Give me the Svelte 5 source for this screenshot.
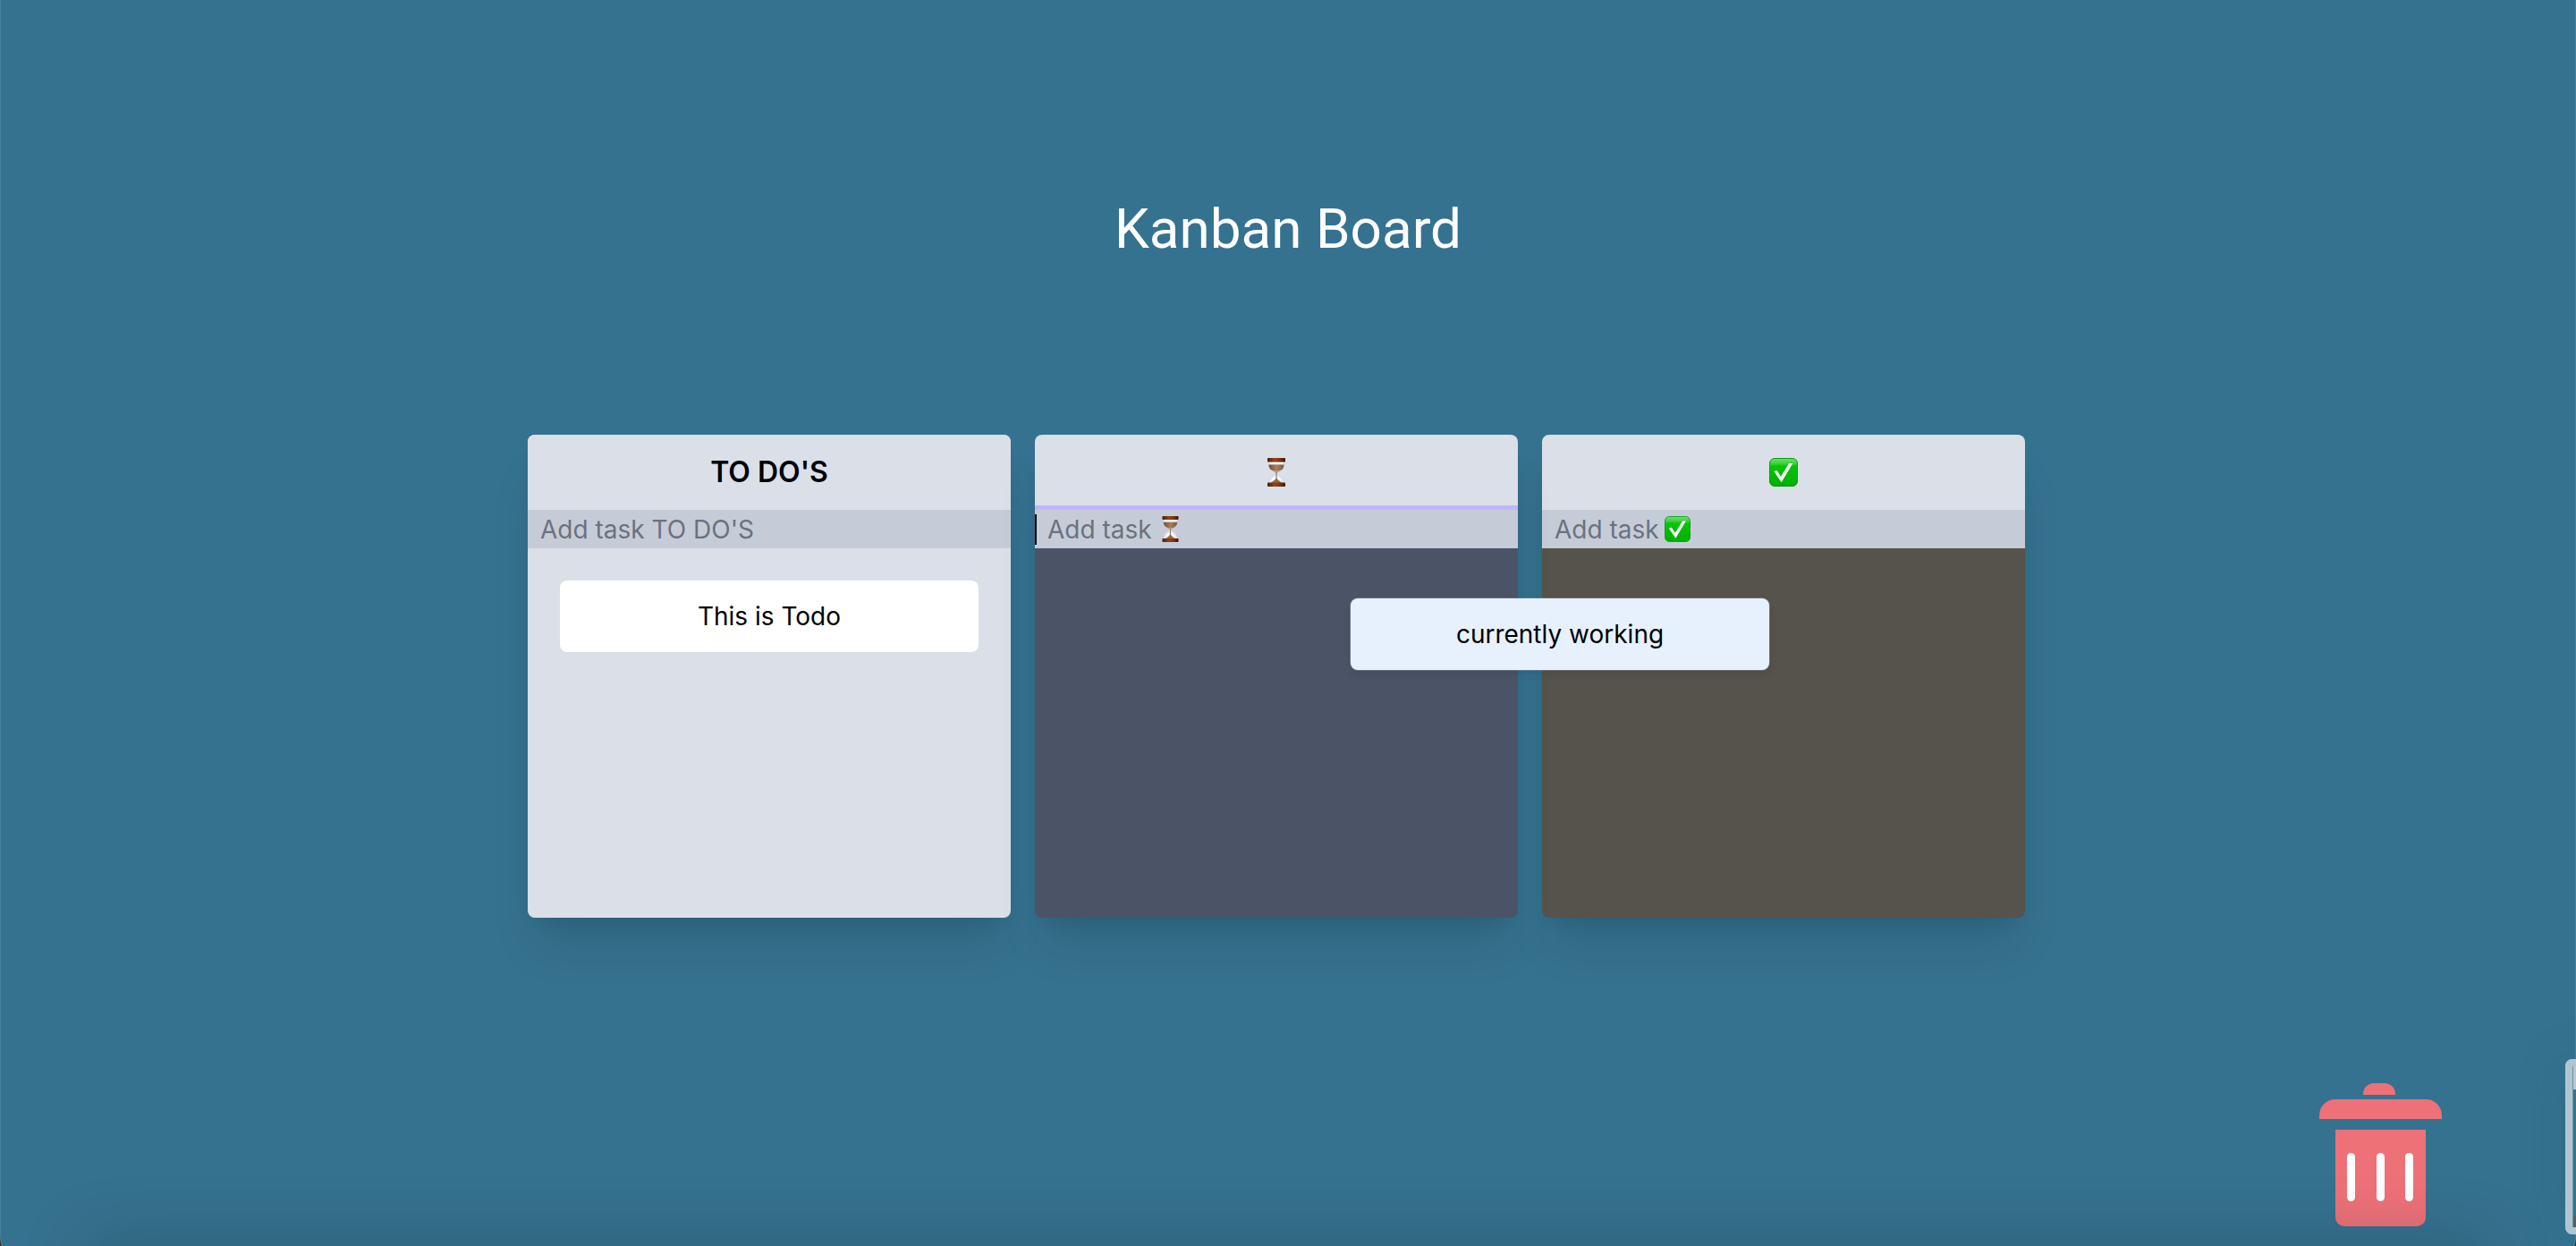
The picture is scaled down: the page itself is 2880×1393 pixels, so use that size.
<script>
  const columns = [
    { id: 'todo', title: "TO DO'S", tone: 'light', tasks: ['This is Todo'] },
    { id: 'doing', title: 'In progress', icon: 'hourglass', tone: 'slate', active: true, tasks: [], dragging: 'currently working' },
    { id: 'done', title: 'Done', icon: 'check', tone: 'stone', tasks: [] }
  ];
</script>

{#snippet emoji(name, kind)}
  {#if name === 'hourglass'}
    <svg class="emoji {kind}" viewBox="0 0 32 32" aria-hidden="true">
      <defs>
        <linearGradient id="wood-{kind}" x1="0" x2="1">
          <stop offset="0" stop-color="#4a1c08" />
          <stop offset="0.4" stop-color="#8f4520" />
          <stop offset="0.7" stop-color="#7a3413" />
          <stop offset="1" stop-color="#3a1404" />
        </linearGradient>
        <linearGradient id="sand-{kind}" x1="0" x2="1">
          <stop offset="0" stop-color="#6f4f33" />
          <stop offset="0.5" stop-color="#a98058" />
          <stop offset="1" stop-color="#7d5b3c" />
        </linearGradient>
      </defs>
      <path d="M7.500 4h17v5c0 4-4 5.500-7.500 7.500v1.500C21 19.500 24.500 23 24.500 28h-17c0-5 3.500-8.500 7.500-10v-1.500C11.500 14.500 7.500 13 7.500 9z" fill="#dfe5f1" stroke="#c3cce0" stroke-width="0.500" />
      <path d="M7.500 7.500h17C24.500 12 22 13.600 18.500 14.800h-5C10 13.600 7.500 12 7.500 7.500z" fill="url(#sand-{kind})" />
      <path d="M12 14.300h8l-3.300 2.500h-1.400z" fill="#aaa09d" />
      <path d="M15.400 15.500h1.200v7h-1.200z" fill="#a57a61" />
      <path d="M10 26c1-3 3-5 4.500-6v4zM22 26c-1-3-3-5-4.500-6v4z" fill="#fff" />
      <path d="M16 22c1 2.500 4 4 6 6H10c2-2 5-3.500 6-6z" fill="#96682c" />
      <path d="M8.500 5.600h15" stroke="#fff" stroke-width="1.400" />
      <rect x="6" y="0" width="20" height="4.400" rx="1" fill="url(#wood-{kind})" />
      <rect x="6" y="27.600" width="20" height="4.400" rx="1" fill="url(#wood-{kind})" />
    </svg>
  {:else}
    <svg class="emoji {kind}" viewBox="0 0 32 32" aria-hidden="true">
      <defs>
        <linearGradient id="green-{kind}" x1="0" x2="0" y1="0" y2="1">
          <stop offset="0" stop-color="#6fe06f" />
          <stop offset="0.180" stop-color="#3fd03f" />
          <stop offset="0.280" stop-color="#06c406" />
          <stop offset="1" stop-color="#00b000" />
        </linearGradient>
      </defs>
      <rect x="0.500" y="0.500" width="31" height="31" rx="5.500" fill="url(#green-{kind})" stroke="#0d9a1c" />
      <path d="M5.200 14.800l3.500-.8 4.300 6.800L22.200 6h4.100L13.700 27.200z" fill="#fff" />
    </svg>
  {/if}
{/snippet}

<main class="page">
  <h1>Kanban Board</h1>

  <div class="board">
    {#each columns as column (column.id)}
      <section class="column {column.tone}" class:raised={column.dragging} aria-label={column.title}>
        <header class:active={column.active}>
          {#if column.icon}
            {@render emoji(column.icon, 'large')}
          {:else}
            <h2>{column.title}</h2>
          {/if}
        </header>
        <div class="entry">
          <input
            type="text"
            aria-label="Add task {column.title}"
            placeholder={column.icon ? 'Add task' : `Add task ${column.title}`}
          />
          {#if column.icon}
            {@render emoji(column.icon, 'small')}
          {/if}
          {#if column.active}<span class="caret"></span>{/if}
        </div>
        <div class="tasks">
          {#each column.tasks as task}
            <article class="task" draggable="true">{task}</article>
          {/each}
        </div>
        {#if column.dragging}
          <article class="task dragging" draggable="true">{column.dragging}</article>
        {/if}
      </section>
    {/each}
  </div>

  <button class="trash" type="button" aria-label="Delete task">
    <svg viewBox="0 0 137 160" aria-hidden="true">
      <g fill="#ee7177">
        <path d="M49 13v-1a12 12 0 0 1 12-12h12a12 12 0 0 1 12 12v1z" />
        <path d="M0 40v-4a18 18 0 0 1 18-18h101a18 18 0 0 1 18 18v4z" />
        <path d="M18 52h101v98a10 10 0 0 1-10 10H28a10 10 0 0 1-10-10z" />
      </g>
      <g fill="#fff">
        <rect x="31" y="78" width="9" height="54" rx="4.500" />
        <rect x="64" y="78" width="9" height="54" rx="4.500" />
        <rect x="96" y="78" width="9" height="54" rx="4.500" />
      </g>
    </svg>
  </button>

  <div class="floor-shade"></div>
  <aside class="preview" aria-hidden="true">
    <div class="preview-bar"></div>
    <div class="preview-foot"></div>
  </aside>
</main>

<style>
  :global(body) {
    margin: 0;
    background: #3a332c;
  }

  .page {
    position: relative;
    box-sizing: border-box;
    display: flex;
    flex-direction: column;
    min-height: 100vh;
    padding: 224px 0 22px;
    overflow: hidden;
    border-radius: 0 0 3px 3px / 0 0 14px 14px;
    background: #35728f;
    box-shadow: inset 1px 0 #47809a, inset -1px 0 #47809a;
    color: #000;
    font-family: Inter, 'Liberation Sans', sans-serif;
    font-size: 28px;
    line-height: 40px;
  }

  h1 {
    margin: 0 0 198px;
    color: #fff;
    font-family: Roboto, 'Liberation Sans', sans-serif;
    font-size: 62px;
    font-weight: 400;
    line-height: 64px;
    text-align: center;
  }

  .board {
    display: flex;
    justify-content: center;
    gap: 27px;
    padding-right: 26px;
  }

  .column {
    position: relative;
    display: flex;
    flex-direction: column;
    width: 540px;
    min-height: 540px;
    border-radius: 8px;
    box-shadow: 0 40px 50px -10px rgba(0, 0, 0, 0.1), 0 16px 20px -12px rgba(0, 0, 0, 0.1);
  }

  .raised {
    z-index: 1;
  }

  .light {
    background: #dbdfe8;
  }

  .slate {
    background: #4a5466;
  }

  .stone {
    background: #56524c;
  }

  header {
    display: flex;
    align-items: center;
    justify-content: center;
    height: 84px;
    border-radius: 8px 8px 0 0;
    background: #dbdfe8;
  }

  header.active {
    box-shadow: inset 0 -5px #c0b5f8;
  }

  h2 {
    margin: 0;
    font-size: 32px;
    font-weight: 600;
    line-height: 40px;
  }

  .entry {
    position: relative;
    background: #c6ccd7;
  }

  input {
    display: block;
    box-sizing: border-box;
    width: 100%;
    height: 43px;
    padding: 0 14px;
    border: 0;
    border-radius: 0;
    outline: 0;
    background: transparent;
    color: #000;
    font: inherit;
  }

  input::placeholder {
    color: #6b7280;
    opacity: 1;
  }

  .emoji {
    display: block;
  }

  .large {
    width: 32px;
    height: 32px;
  }

  .small {
    position: absolute;
    top: 7px;
    left: 137px;
    width: 29px;
    height: 29px;
  }

  .caret {
    position: absolute;
    top: 5px;
    left: 0;
    width: 2px;
    height: 34px;
    background: #000;
  }

  .tasks {
    padding: 36px;
  }

  .task {
    padding: 20px;
    border-radius: 8px;
    background: #fff;
    text-align: center;
  }

  .dragging {
    position: absolute;
    top: 183px;
    left: 353px;
    box-sizing: border-box;
    width: 468px;
    background: #e7f1fe;
    box-shadow: 0 0 0 1px rgba(150, 160, 175, 0.4), 0 4px 10px rgba(0, 0, 0, 0.1);
  }

  .trash {
    align-self: flex-end;
    width: 137px;
    margin: auto 150px 0 0;
    padding: 0;
    border: 0;
    background: none;
  }

  .trash svg {
    display: block;
    width: 100%;
  }

  .floor-shade {
    position: absolute;
    right: 100px;
    bottom: -40px;
    left: 100px;
    height: 40px;
    box-shadow: 0 0 70px rgba(30, 50, 70, 0.4);
  }

  .preview {
    position: absolute;
    right: -4px;
    bottom: 13px;
    box-sizing: border-box;
    display: flex;
    flex-direction: column;
    justify-content: space-between;
    width: 16px;
    height: 196px;
    border: 8px solid #afc6d2;
    border-right: 0;
    border-radius: 8px 0 0 8px;
    background: #35728f;
    box-shadow: 0 0 50px rgba(20, 90, 115, 0.3), inset 1px 1px #71909c;
  }

  .preview-bar {
    height: 26px;
    margin-left: 1px;
    background: #b4c9d4;
  }

  .preview-foot {
    height: 12px;
    margin-left: 1px;
    background: #55615f;
  }
</style>
